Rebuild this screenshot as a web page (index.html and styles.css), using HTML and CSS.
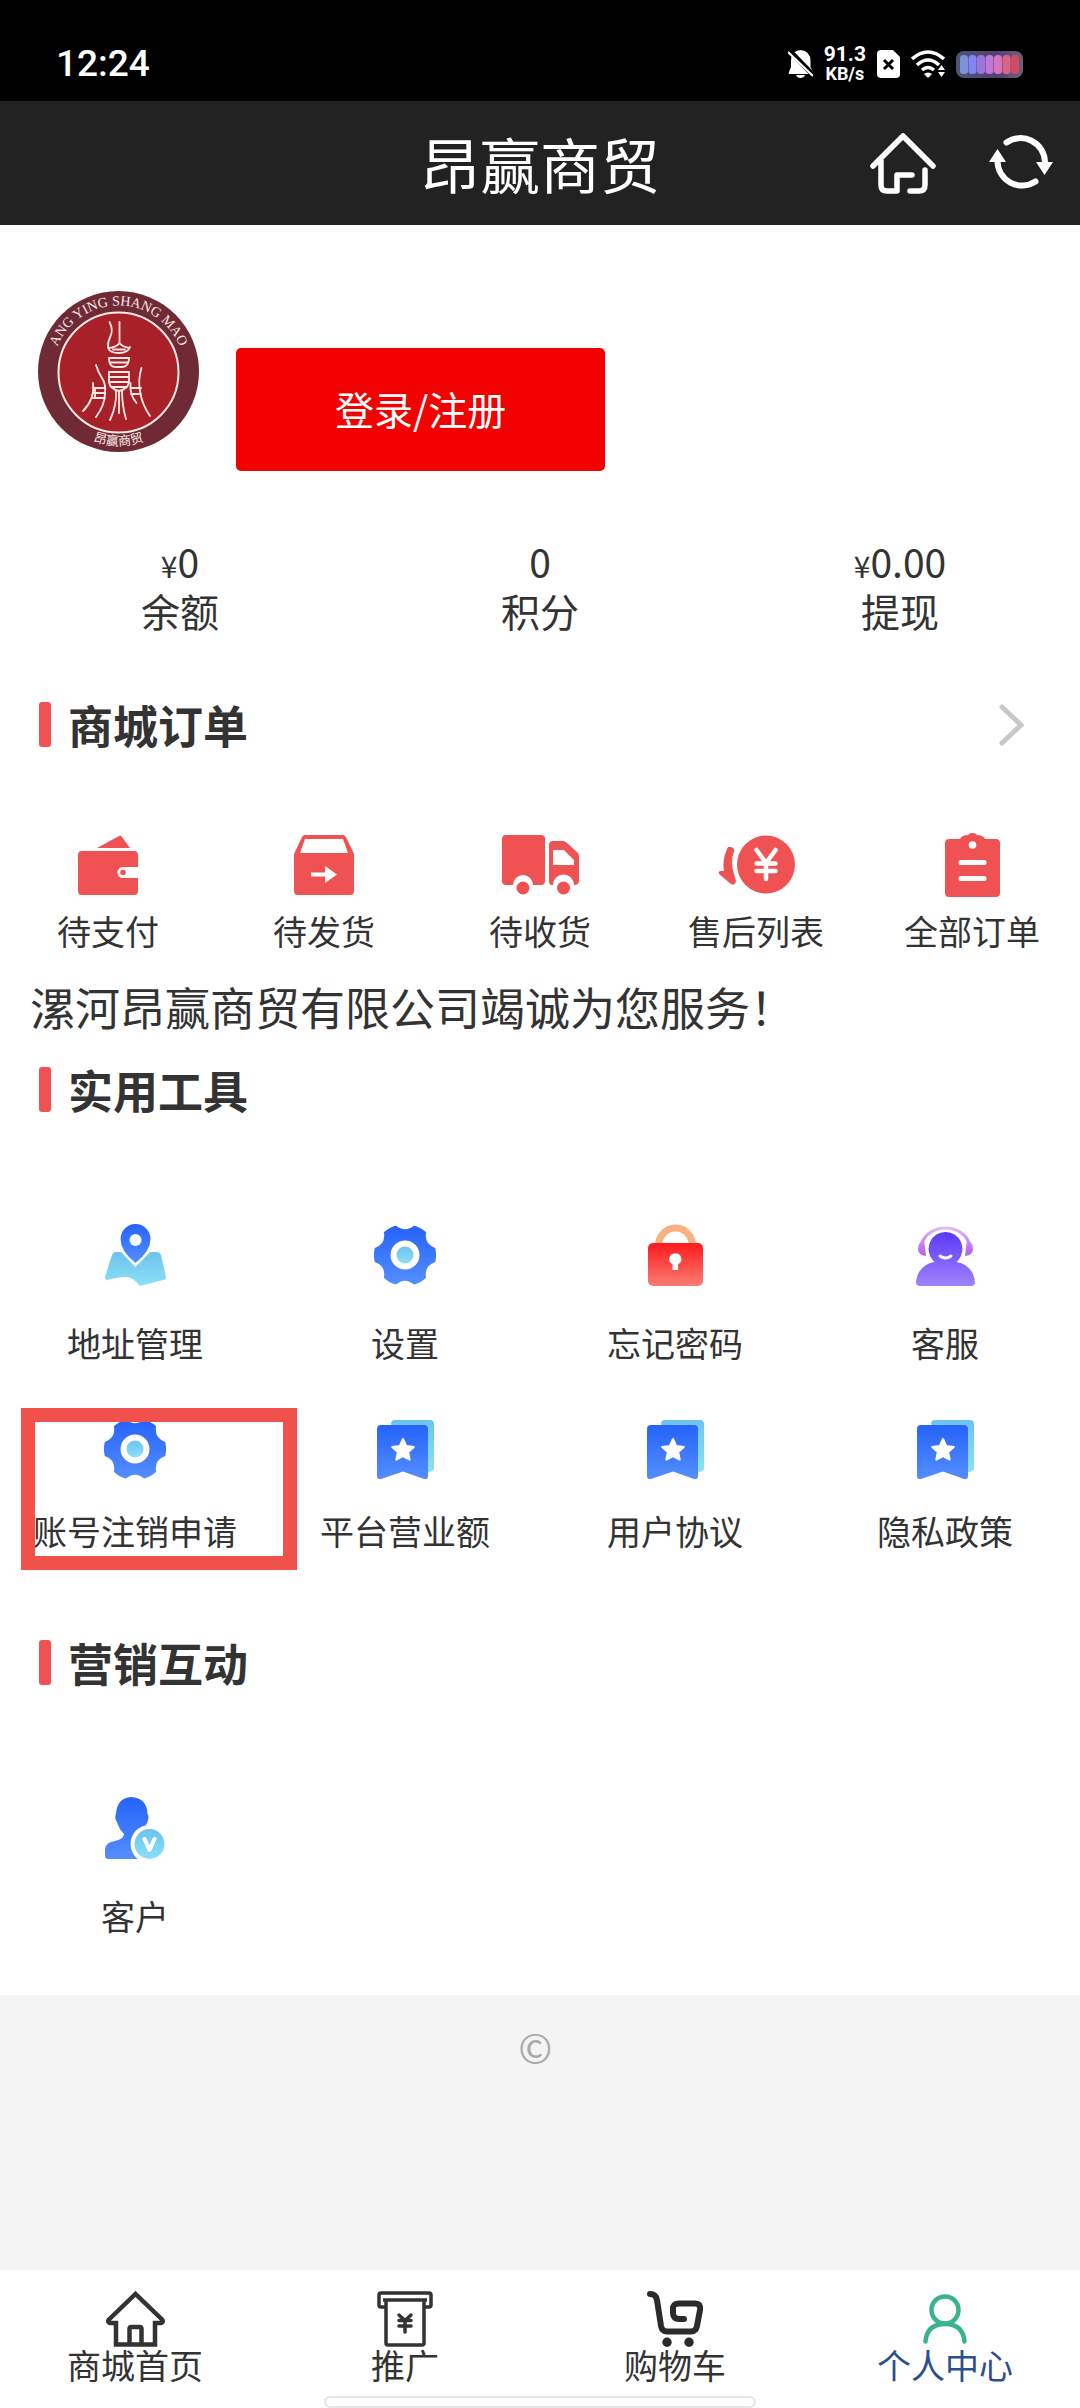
FILE: index.html
```html
<!DOCTYPE html>
<html lang="zh-CN">
<head>
    <meta charset="UTF-8">
    <meta name="viewport" content="width=device-width">
    <title>昂赢商贸</title>
    <link rel="stylesheet" href="styles.css">
</head>
<body>
    <!-- shared icons and gradients -->
    <svg class="defs" width="0" height="0" aria-hidden="true">
        <defs>
            <linearGradient id="blue" x1="0" y1="0" x2="0" y2="1">
                <stop offset="0" stop-color="#2563fb"/><stop offset="1" stop-color="#548efe"/>
            </linearGradient>
            <linearGradient id="cyan" x1="0" y1="0" x2="0" y2="1">
                <stop offset="0" stop-color="#6cc3ee"/><stop offset="1" stop-color="#8be0f6"/>
            </linearGradient>
            <linearGradient id="red" x1="0" y1="0" x2="0" y2="1">
                <stop offset="0" stop-color="#fd1a1c"/><stop offset="1" stop-color="#fb7c72"/>
            </linearGradient>
            <linearGradient id="purple" x1="0" y1="0" x2="0" y2="1">
                <stop offset="0" stop-color="#5a38fb"/><stop offset="1" stop-color="#a183fb"/>
            </linearGradient>
            <linearGradient id="pink" gradientUnits="userSpaceOnUse" x1="0" y1="0" x2="0" y2="32">
                <stop offset="0" stop-color="#e3c3f3"/><stop offset="1" stop-color="#b455f3"/>
            </linearGradient>
            <linearGradient id="battery" x1="0" y1="0" x2="1" y2="0">
                <stop offset="0" stop-color="#4c5578"/><stop offset="0.6" stop-color="#4f3f70"/><stop offset="1" stop-color="#6e6478"/>
            </linearGradient>
            <symbol id="gear" viewBox="-31 -31 62 62">
                <path fill="url(#blue)" d="M30.2-7Q32 0 30.2 7Q19 11 21.1 22.7Q16 27.7 9.1 29.6Q0 22-9.1 29.6Q-16 27.7-21.1 22.7Q-19 11-30.2 7Q-32 0-30.2-7Q-19-11-21.1-22.7Q-16-27.7-9.1-29.6Q0-22 9.1-29.6Q16-27.7 21.1-22.7Q19-11 30.2-7z"/>
                <circle r="14.5" fill="#fff"/>
                <circle r="8.5" fill="url(#cyan)"/>
            </symbol>
            <symbol id="book" viewBox="0 0 57 59">
                <path fill="url(#cyan)" d="M14 4q0-4 4-4h35q4 0 4 4v44q0 4-6 4h-6z"/>
                <path fill="url(#blue)" d="M0 9q0-4 4-4h43q4 0 4 4v47q0 4-4 3L26 51.500 4 59q-4 1-4-3z"/>
                <path fill="#fff" stroke="#fff" stroke-width="2" stroke-linejoin="round" d="M26 19l3.200 7 7.600.9-5.600 5.200 1.500 7.500L26 36l-6.700 3.600 1.500-7.500-5.600-5.200 7.600-.9z"/>
            </symbol>
        </defs>
    </svg>

    <div class="page">
        <div class="status">
            <span class="time">12:24</span>
            <div class="status-icons">
                <svg width="25" height="28" viewBox="0 0 25 28">
                    <path fill="#fff" d="M12.500 0q10 1 10 11v6l2.500 5q0 2-2 2H2q-2 0-1-2l2-5v-6Q3 1 12.500 0zM8 25h9q-1 3-4.500 3T8 25z"/>
                    <path stroke="#000" stroke-width="5" d="M1 0l25 26"/>
                    <path stroke="#fff" stroke-width="2" d="M0 2l25 24"/>
                </svg>
                <div class="speed"><span>91.3</span><span class="unit">KB/s</span></div>
                <svg width="23" height="28" viewBox="0 0 23 28">
                    <path fill="#fff" d="M4 0h12l7 7v17q0 4-4 4H4q-4 0-4-4V4q0-4 4-4z"/>
                    <path stroke="#000" stroke-width="3" d="M7 10l9 9M16 10l-9 9"/>
                </svg>
                <svg width="34" height="28" viewBox="0 0 34 28">
                    <g fill="none" stroke="#fff" stroke-width="3.500">
                        <path d="M1 9Q17-5 33 9M6 15Q17 5 28 15M11 20Q17 15 23 20"/>
                    </g>
                    <path fill="#fff" d="M13 24q4-3 8 0l-4 4zM27 20l3.500-5 3.500 5zM27 22h7l-3.500 5z"/>
                </svg>
                <svg width="67" height="27" viewBox="0 0 67 27">
                    <rect width="67" height="27" rx="8" fill="url(#battery)"/>
                    <rect x="4" y="4" width="8" height="19" rx="3.500" fill="#7b91d8"/>
                    <rect x="12.500" y="4" width="8" height="19" rx="3.500" fill="#8285f2"/>
                    <rect x="21" y="4" width="8" height="19" rx="3.500" fill="#9a75dc"/>
                    <rect x="29.500" y="4" width="8" height="19" rx="3.500" fill="#c077dc"/>
                    <rect x="38" y="4" width="8" height="19" rx="3.500" fill="#d873bd"/>
                    <rect x="46.500" y="4" width="8" height="19" rx="3.500" fill="#d76687"/>
                    <rect x="55" y="4" width="8" height="19" rx="3.500" fill="#d24a63"/>
                </svg>
            </div>
        </div>

        <header class="header">
            <h1>昂赢商贸</h1>
            <div class="header-actions">
                <button type="button" aria-label="首页">
                    <svg width="66" height="62" viewBox="0 0 66 62" fill="none" stroke="#fff" stroke-width="5.500" stroke-linecap="round" stroke-linejoin="round">
                        <path d="M3 34L33 4l30 30M11 29v24q0 6 6 6h10V43h15M55 38v15q0 6-6 6H40"/>
                    </svg>
                </button>
                <button type="button" aria-label="刷新">
                    <svg width="64" height="58" viewBox="0 0 64 58">
                        <path fill="none" stroke="#fff" stroke-width="6" stroke-linecap="round" d="M17.500 8.500A24.500 24.500 0 0 1 56 28M46.500 47.500A24.500 24.500 0 0 1 8.500 27"/>
                        <path fill="#fff" d="M47 28h17l-8.500 13zM0 28h17L8.500 15z"/>
                    </svg>
                </button>
            </div>
        </header>

        <main class="main">
            <section class="profile">
                <svg class="avatar" width="161" height="161" viewBox="0 0 161 161">
                    <circle cx="80.500" cy="80.500" r="80.500" fill="#6f2a35"/>
                    <circle cx="80.500" cy="81.500" r="60" fill="#a82129" stroke="#fbe9e6" stroke-width="2"/>
                    <path id="arc-top" fill="none" d="M14.500 80.500a66 66 0 0 1 132 0"/>
                    <path id="arc-bottom" fill="none" d="M6.500 80.500a74 74 0 0 0 148 0"/>
                    <text class="seal-top"><textPath href="#arc-top" startOffset="50%">ANG YING SHANG MAO</textPath></text>
                    <text class="seal-bottom"><textPath href="#arc-bottom" startOffset="50%">昂赢商贸</textPath></text>
                    <g fill="none" stroke="#fbe9e6" stroke-width="1.800" stroke-linecap="round">
                        <path d="M71.500 31q4 8 1 14t-2.500 12q2 5 11 5t11-6M81.500 31v21M71 57q8-1 10.500-5 3 4 10 5M75 58.500h12"/>
                        <path d="M71 67h20q0 9-7 9h-7q-6 0-6-9zM72 71.500h18"/>
                        <path d="M71 81h20v10q-1 7-10 9-9-2-10-9zM71 86h20M71 91h20M73 96h16"/>
                        <path d="M58 74q2 7 6 13t3 15q0 12-9 24M55 92q2 16-10 28M56 97h11M55 102h12M55 107h12M57 97v10"/>
                        <path d="M103.500 77q-4 12-1 26 2 11 9.500 22M92.500 92q-1 12 6 20M93 97h10M93 103h10"/>
                        <path d="M78 100q1 14-6 29M81 100v22M84 100q0 14 4 28"/>
                    </g>
                </svg>
                <button type="button" class="login">登录/注册</button>
            </section>

            <section class="stats">
                <div class="stat"><span><small>¥</small>0</span><span>余额</span></div>
                <div class="stat"><span>0</span><span>积分</span></div>
                <div class="stat"><span><small>¥</small>0.00</span><span>提现</span></div>
            </section>

            <section>
                <div class="heading">
                    <h2>商城订单</h2>
                    <a class="more" href="#orders" aria-label="全部订单">
                        <svg width="25" height="42" viewBox="0 0 25 42" fill="none" stroke="#c8c8c8" stroke-width="5" stroke-linecap="round"><path d="M3 3l19 18L3 39"/></svg>
                    </a>
                </div>
                <nav class="orders" id="orders">
                    <a class="item" href="#pay">
                        <span class="icon">
                            <svg width="60" height="60" viewBox="0 0 60 60" fill="#f05253">
                                <path d="M19 13L41 1q2-1 3 1l8 11zM4 16h52q4 0 4 4v12H45a5.500 5.500 0 0 0 0 11h15v13q0 4-4 4H4q-4 0-4-4V20q0-4 4-4z"/>
                                <circle cx="45" cy="37.500" r="2.800"/>
                            </svg>
                        </span>
                        待支付
                    </a>
                    <a class="item" href="#send">
                        <span class="icon">
                            <svg width="60" height="60" viewBox="0 0 60 60" fill="#f05253">
                                <path fill-rule="evenodd" d="M8 2q1-2 3-2h38q2 0 3 2l8 17v37q0 4-4 4H4q-4 0-4-4V19zM11 4L6 18h48L49 4z"/>
                                <path fill="#fff" d="M17 37.500h14V31l12 8.500L31 48v-6.500H17z"/>
                            </svg>
                        </span>
                        待发货
                    </a>
                    <a class="item" href="#receive">
                        <span class="icon">
                            <svg width="77" height="60" viewBox="0 0 77 60" fill="#f05253">
                                <path d="M4 0h35q4 0 4 4v42q0 4-4 4h-8a10 10 0 0 0-20 0H4q-4 0-4-4V4q0-4 4-4z"/>
                                <path fill-rule="evenodd" d="M51 6h10q2 0 4 2l10 9q2 2 2 4v25q0 4-5 4a10 10 0 0 0-21 0h-1q-3 0-3-4V10q0-4 4-4zM51 15v15h21v-5L62 15z"/>
                                <circle cx="21" cy="53" r="6.500"/><circle cx="61.500" cy="53" r="6.500"/>
                            </svg>
                        </span>
                        待收货
                    </a>
                    <a class="item" href="#service">
                        <span class="icon">
                            <svg width="77" height="60" viewBox="0 0 77 60" fill="#f05253">
                                <circle cx="48" cy="29.500" r="29"/>
                                <path d="M9 14q1-3 4-2 4 1 3 4-4 12 0 23l2 7q-1 5-5 3L1 39q-1-3 2-3h3Q4 25 9 14z"/>
                                <path fill="none" stroke="#fff" stroke-width="4.500" stroke-linecap="round" d="M38.500 15L48 28l9.500-13M38.500 28.500h19M38.500 36h19M48 28v16"/>
                            </svg>
                        </span>
                        售后列表
                    </a>
                    <a class="item" href="#all">
                        <span class="icon">
                            <svg width="55" height="64" viewBox="0 0 55 64" fill="#f05253">
                                <path d="M4 6h11q2-4 8-4 1-2 4.500-2T32 2q6 0 8 4h11q4 0 4 4v50q0 4-4 4H4q-4 0-4-4V10q0-4 4-4z"/>
                                <circle cx="27.500" cy="12" r="3.800" fill="#fff"/>
                                <path stroke="#fff" stroke-width="5" stroke-linecap="round" d="M16 29.500h23M16 45.500h23"/>
                            </svg>
                        </span>
                        全部订单
                    </a>
                </nav>
            </section>

            <p class="notice">漯河昂赢商贸有限公司竭诚为您服务！</p>

            <section>
                <div class="heading"><h2>实用工具</h2></div>
                <nav class="tools">
                    <a class="item" href="#address">
                        <span class="icon">
                            <svg width="61" height="62" viewBox="0 0 61 62">
                                <path fill="url(#cyan)" d="M7 31q1-3 4-3h5l14.500 15L45 28h6q4 0 5 3l5 22q0 2-1 2.500L35 62q-7-9-14-9-8 0-19 3-2 0-2-3z"/>
                                <path fill="url(#blue)" d="M30.500 0a15 15 0 0 1 15 15q0 12-15 24-15-12-15-24a15 15 0 0 1 15-15z"/>
                                <circle cx="30.500" cy="16" r="6" fill="#fff"/>
                            </svg>
                        </span>
                        地址管理
                    </a>
                    <a class="item" href="#settings">
                        <span class="icon"><svg width="62" height="62"><use href="#gear"/></svg></span>
                        设置
                    </a>
                    <a class="item" href="#password">
                        <span class="icon">
                            <svg width="55" height="62" viewBox="0 0 55 62">
                                <path fill="none" stroke="#f8b183" stroke-width="7" d="M10.500 22a17 18 0 0 1 34 0"/>
                                <rect y="19" width="55" height="43" rx="5" fill="url(#red)"/>
                                <path fill="#fff" d="M27 29.500a5.500 5.500 0 0 1 3 10.500v6h-5.500v-6a5.500 5.500 0 0 1 2.500-10.500z"/>
                            </svg>
                        </span>
                        忘记密码
                    </a>
                    <a class="item" href="#help">
                        <span class="icon">
                            <svg width="59" height="61" viewBox="0 0 59 61">
                                <path fill="none" stroke="url(#pink)" stroke-width="3" d="M6 18a24.500 21 0 0 1 47 0"/>
                                <path fill="url(#pink)" d="M8 14q-6 4-6 10t8 7zM51 14q6 4 6 10t-8 7z"/>
                                <path fill="url(#purple)" d="M29.500 7a16.500 17 0 0 1 13 28l-2 2Q57 40 59 57q0 4-4 4H4q-4 0-4-4 2-17 18.500-20l-2-2a16.500 17 0 0 1 13-28z"/>
                                <path fill="none" stroke="#fff" stroke-width="3" stroke-linecap="round" d="M24 31q5.500 4 11 0"/>
                            </svg>
                        </span>
                        客服
                    </a>
                </nav>
                <nav class="tools compact">
                    <a class="item marked" href="#close-account">
                        <span class="icon"><svg width="62" height="62"><use href="#gear"/></svg></span>
                        账号注销申请
                    </a>
                    <a class="item" href="#turnover">
                        <span class="icon"><svg width="57" height="59"><use href="#book"/></svg></span>
                        平台营业额
                    </a>
                    <a class="item" href="#agreement">
                        <span class="icon"><svg width="57" height="59"><use href="#book"/></svg></span>
                        用户协议
                    </a>
                    <a class="item" href="#privacy">
                        <span class="icon"><svg width="57" height="59"><use href="#book"/></svg></span>
                        隐私政策
                    </a>
                </nav>
            </section>

            <section class="marketing">
                <div class="heading"><h2>营销互动</h2></div>
                <nav class="tools">
                    <a class="item" href="#customer">
                        <span class="icon">
                            <svg width="60" height="62" viewBox="0 0 60 62">
                                <path fill="url(#blue)" d="M26 0q16 1 16.500 17 2 2 0 8-2 5-5 8-3 5-1 9L36 62H3q-3 0-3-4v-6q1-7 10-8 9-2 9-7-5-5-7-12-3-5-1-8Q12 1 26 0z"/>
                                <circle cx="44.500" cy="47" r="19" fill="#fff"/>
                                <circle cx="44.500" cy="47" r="15" fill="url(#cyan)"/>
                                <path fill="none" stroke="#fff" stroke-width="4" stroke-linecap="round" stroke-linejoin="round" d="M39.500 42l5 11 5-11"/>
                            </svg>
                        </span>
                        客户
                    </a>
                </nav>
            </section>
        </main>

        <footer class="copyright">©&nbsp;</footer>

        <nav class="tabbar">
            <a class="tab" href="#home">
                <span class="icon">
                    <svg width="59" height="56" viewBox="0 0 59 56" fill="none" stroke="#333" stroke-width="4.500">
                        <path d="M10 53.500V32H4q-3-1-1-3.500L29.500 3 56 28.500q2 2.500-1 3.500h-6v21.500zM23.500 54V38q0-2 2-2h8q2 0 2 2v16"/>
                    </svg>
                </span>
                商城首页
            </a>
            <a class="tab" href="#promote">
                <span class="icon">
                    <svg width="56" height="56" viewBox="0 0 56 56" fill="none" stroke="#333" stroke-width="3.500">
                        <path d="M9 16H4q-2 0-2-2V4q0-2 2-2h48q2 0 2 2v10q0 2-2 2h-5M6 9h44M9 9v43q0 2 2 2h34q2 0 2-2V9"/>
                        <path stroke-linecap="round" d="M22 24l6 5.500 6-5.500M22 29.500h12M22 35h12M28 29v12"/>
                    </svg>
                </span>
                推广
            </a>
            <a class="tab" href="#cart">
                <span class="icon">
                    <svg width="56" height="56" viewBox="0 0 56 56">
                        <path fill="none" stroke="#2b2b2b" stroke-width="6" stroke-linecap="round" d="M3 3q6 0 7 6l4 26q1 5.500 6 5.500h24q5 0 6-5.500l3-16q1-6.500-5-6.500H32q-6.500 0-6 6v4q.5 5.500 6 5.500h5"/>
                        <circle cx="20" cy="51.300" r="4.700" fill="#2b2b2b"/><circle cx="42" cy="51.300" r="4.700" fill="#2b2b2b"/>
                    </svg>
                </span>
                购物车
            </a>
            <a class="tab active" href="#me">
                <span class="icon">
                    <svg width="44" height="50" viewBox="0 0 44 50" fill="none" stroke="#38b38e" stroke-width="4.500" stroke-linecap="round">
                        <circle cx="22" cy="16" r="13.500"/>
                        <path d="M2.500 47.500Q4 30 22 30t19.500 17.500"/>
                    </svg>
                </span>
                个人中心
            </a>
            <span class="home-indicator"></span>
        </nav>
    </div>
</body>
</html>
```
FILE: styles.css
```css
* {
    box-sizing: border-box;
}
body {
    margin: 0;
    background-color: #f4f4f4;
    color: #333;
    font-family: "Noto Sans CJK SC", sans-serif;
    font-size: 34px;
    line-height: 34px;
}
a {
    color: inherit;
    text-decoration: none;
}
button {
    border: 0;
    padding: 0;
    background: none;
    font-family: inherit;
}
svg {
    display: block;
    flex: none;
}
.defs {
    position: absolute;
}
.page {
    display: flex;
    flex-direction: column;
    min-height: 100vh;
}

/* phone status bar */
.status {
    display: flex;
    justify-content: space-between;
    align-items: center;
    height: 101px;
    padding: 27px 57px 0 56px;
    background-color: #000;
    color: #fff;
    font-family: Roboto, sans-serif;
}
.time {
    font-size: 37px;
    font-weight: 500;
}
.status-icons {
    display: flex;
    align-items: center;
    gap: 11px;
}
.speed {
    display: flex;
    flex-direction: column;
    align-items: center;
    font-size: 21px;
    line-height: 20px;
    font-weight: bold;
}
.unit {
    font-size: 18px;
}

/* title bar */
.header {
    display: grid;
    grid-template-columns: 1fr auto 1fr;
    align-items: center;
    height: 124px;
    padding: 0 27px;
    background-color: #222;
    color: #fff;
}
.header h1 {
    grid-column: 2;
    margin: 0;
    font-size: 60px;
    line-height: 60px;
    font-weight: normal;
}
.header-actions {
    display: flex;
    justify-content: flex-end;
    align-items: center;
    gap: 53px;
}

.main {
    padding-bottom: 62px;
    background-color: #fff;
}
.profile {
    display: flex;
    align-items: flex-start;
    gap: 37px;
    padding: 66px 38px 0;
}
.seal-top {
    fill: #fbe9e6;
    font-family: "Liberation Serif", serif;
    font-size: 14px;
    text-anchor: middle;
}
.seal-bottom {
    fill: #fbe9e6;
    font-size: 13px;
    text-anchor: middle;
}
.login {
    margin-top: 57px;
    padding: 36px 99px 38px;
    border-radius: 5px;
    background-color: #f30000;
    color: #fff;
    font-size: 39px;
    line-height: 49px;
}

.stats {
    display: grid;
    grid-template-columns: repeat(3, 1fr);
    padding: 66px 0 67px;
    font-size: 39px;
    line-height: 49px;
    text-align: center;
}
.stat {
    display: flex;
    flex-direction: column;
}
.stat small {
    font-size: 30px;
    line-height: 30px;
}

.heading {
    display: flex;
    justify-content: space-between;
    align-items: center;
    padding: 0 56px 0 39px;
}
.heading h2 {
    display: flex;
    align-items: center;
    gap: 17px;
    margin: 0;
    font-size: 45px;
    line-height: 45px;
    font-weight: bold;
}
.heading h2::before {
    content: "";
    width: 12px;
    height: 45px;
    border-radius: 3px;
    background-color: #f05253;
}

.item,
.tab {
    display: flex;
    flex-direction: column;
    align-items: center;
    white-space: nowrap;
}
.icon {
    display: flex;
    justify-content: center;
    align-items: center;
    height: 60px;
}
.orders {
    display: grid;
    grid-template-columns: repeat(5, 1fr);
    padding-top: 88px;
}
.orders .item {
    gap: 19px;
}
.notice {
    margin: 36px 30px 38px;
    font-size: 45px;
    line-height: 45px;
}
.tools {
    display: grid;
    grid-template-columns: repeat(4, 1fr);
    padding-top: 113px;
}
.tools .item {
    gap: 41px;
}
.compact {
    padding-top: 59px;
}
.compact .item {
    gap: 35px;
}
.marked {
    position: relative;
}
.marked::after {
    content: "";
    position: absolute;
    top: -11px;
    right: -27px;
    bottom: -22px;
    left: 21px;
    border: 14px solid #f0514b;
}
.marketing {
    margin-top: 92px;
}

.copyright {
    flex: 1;
    padding-top: 33px;
    color: #aaa;
    font-size: 41px;
    text-align: center;
}

/* bottom tabs */
.tabbar {
    display: grid;
    grid-template-columns: repeat(4, 1fr);
    position: relative;
    padding: 20px 0 26px;
    background-color: #fff;
}
.tab {
    height: 92px;
}
.active {
    color: #2b4f8e;
}
.home-indicator {
    position: absolute;
    bottom: 0;
    left: 30%;
    right: 30%;
    height: 12px;
    border: 2px solid #e6e6e6;
    border-radius: 6px;
    background-color: #fff;
}
```
